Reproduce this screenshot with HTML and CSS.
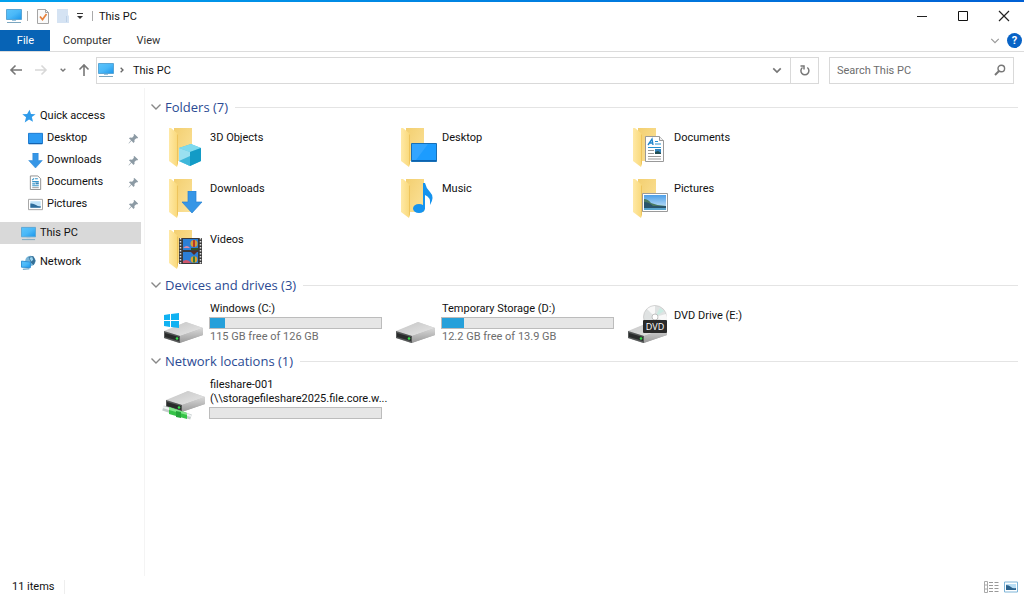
FILE: index.html
```html
<!DOCTYPE html>
<html lang="en">
<head>
<meta charset="utf-8">
<meta name="viewport" content="width=device-width, initial-scale=1">
<title>This PC</title>
<link rel="stylesheet" href="styles.css">
</head>
<body>
<svg class="defs" aria-hidden="true">
  <defs>
    <linearGradient id="screen" x1="0" y1="0" x2="1" y2="1"><stop offset="0" stop-color="#5cc4fb"/><stop offset=".5" stop-color="#4ab8f8"/><stop offset="1" stop-color="#1b95ea"/></linearGradient>
    <linearGradient id="flap" x1="0" y1="0" x2="1" y2="0"><stop offset="0" stop-color="#ffe9a6"/><stop offset="1" stop-color="#f9d878"/></linearGradient>
    <linearGradient id="back" x1="0" y1="0" x2="1" y2="1"><stop offset="0" stop-color="#f3cf70"/><stop offset="1" stop-color="#fbe29a"/></linearGradient>
    <linearGradient id="metal" x1="0" y1="0" x2="1" y2="1"><stop offset="0" stop-color="#c4c4c4"/><stop offset="1" stop-color="#e8e8e8"/></linearGradient>
    <linearGradient id="sky" x1="0" y1="0" x2="0" y2="1"><stop offset="0" stop-color="#4d9fe8"/><stop offset="1" stop-color="#d3ecfa"/></linearGradient>
    <linearGradient id="side" x1="0" y1="0" x2="0" y2="1"><stop offset="0" stop-color="#d8d8d8"/><stop offset="1" stop-color="#9a9a9a"/></linearGradient>
    <symbol id="pc" viewBox="0 0 16 16"><path d="M.5 1.500h15v10H.5z" fill="url(#screen)" stroke="#5aa6d6"/><path d="M6 12h4v1H6z" fill="#9fc4dc"/><path d="M1 14.500h14" stroke="#7ba6c0"/></symbol>
    <symbol id="folder" viewBox="0 0 48 48"><path d="M14 7h18v33H14z" fill="url(#back)"/><path d="M9 7h2l7 6v29l-1 4-8-6z" fill="url(#flap)"/><path d="M17 13l1 1v28l-1 3z" fill="#eec45c"/></symbol>
    <symbol id="drive" viewBox="0 0 48 48"><path d="M4 33l22-10 17 6v7L19 44 4 39z" fill="url(#side)"/><path d="M4 32l22-9 17 6-23 8z" fill="url(#metal)"/><path d="M4 32l16 5v7L4 39z" fill="#555858"/><path d="M5 34l14 4v4L5 38z" fill="#292b2b"/><circle cx="17" cy="39.500" r="1.300" fill="#35e04a"/><path d="M20 37l23-8v7l-23 8z" fill="url(#side)"/></symbol>
    <symbol id="pin" viewBox="0 0 12 12"><path d="M7 1l4 4-1 1-1-.4-2 2 .2 2L6 11 3.800 8.500 1 11.500l-.4-.4L3.300 8 1 5.800 2.300 5l2.200.1 2-2L6 2z" fill="#8c9aa4"/></symbol>
    <symbol id="chev" viewBox="0 0 12 12"><path d="M1.500 3.500L6 8l4.500-4.500" fill="none" stroke="currentColor" stroke-width="1.400"/></symbol>
    <symbol id="arrow" viewBox="0 0 16 16"><path d="M14 8H3M7.500 3.500L3 8l4.500 4.500" fill="none" stroke="currentColor" stroke-width="1.600"/></symbol>
    <symbol id="down" viewBox="0 0 22 22"><path d="M7 0h8v11h6L11 22 1 11h6z" fill="#3696e6" stroke="#2583d3" stroke-width=".7"/></symbol>
    <symbol id="photo" viewBox="0 0 28 21"><path d="M.5.500h25v18H.5z" fill="#fff" stroke="#9a9a9a"/><path d="M2 2h22v15H2z" fill="url(#sky)"/><path d="M2 6q4 0 7 4 7 3 15 3v2H2z" fill="#4a7a62"/><path d="M2 9q5 0 9 4h13v2H2z" fill="#29556a"/><path d="M2 15h22v2H2z" fill="#58a5ce"/></symbol>
  </defs>
</svg>

<div class="window">
  <header class="titlebar">
    <svg class="i16"><use href="#pc"/></svg>
    <span class="bar"></span>
    <button class="quick" aria-label="Properties"><svg class="i16" viewBox="0 0 16 16"><path d="M2.500 1.500h8l3 3v11h-11z" fill="#fafafa" stroke="#a5a5a5"/><path d="M10.500 1.500v3h3" fill="none" stroke="#a5a5a5"/><path d="M5 8.500l2.500 3L11.500 6" fill="none" stroke="#e8823c" stroke-width="1.700"/></svg></button>
    <button class="quick" aria-label="New folder"><svg class="i16" viewBox="0 0 16 16"><path d="M2 1h11v6l1 1v7H2z" fill="#d5e3f3"/><path d="M11.500 8v6" stroke="#bdd1e8"/></svg></button>
    <button class="more" aria-label="Customize toolbar"><svg class="i8" viewBox="0 0 8 8"><path d="M1 1.500h6" stroke="#333"/><path d="M1 4h6L4 7z" fill="#333"/></svg></button>
    <span class="bar"></span>
    <h1 class="title">This PC</h1>
    <div class="controls">
      <button aria-label="Minimize"><svg class="i12" viewBox="0 0 12 12"><path d="M1 6.500h10" stroke="#222"/></svg></button>
      <button aria-label="Maximize"><svg class="i12" viewBox="0 0 12 12"><path d="M1.500 1.500h9v9h-9z" fill="none" stroke="#111"/></svg></button>
      <button aria-label="Close"><svg class="i12" viewBox="0 0 12 12"><path d="M1 1l10 10M11 1L1 11" stroke="#222" stroke-width="1.200"/></svg></button>
    </div>
  </header>

  <nav class="ribbon" aria-label="Ribbon">
    <button class="tab file">File</button>
    <button class="tab">Computer</button>
    <button class="tab">View</button>
    <div class="ribbon-end">
      <button aria-label="Expand ribbon"><svg class="i10 pale"><use href="#chev"/></svg></button>
      <button class="help" aria-label="Help">?</button>
    </div>
  </nav>

  <div class="toolbar">
    <div class="history">
      <button aria-label="Back"><svg class="i16"><use href="#arrow"/></svg></button>
      <button aria-label="Forward" class="off"><svg class="i16 flip"><use href="#arrow"/></svg></button>
      <button aria-label="Recent locations"><svg class="i8" viewBox="0 0 12 12"><path d="M2.500 4L6 7.500 9.500 4" fill="none" stroke="#777" stroke-width="2"/></svg></button>
      <button aria-label="Up"><svg class="i16 up"><use href="#arrow"/></svg></button>
    </div>
    <div class="address">
      <svg class="i16"><use href="#pc"/></svg>
      <svg class="i8 right" viewBox="0 0 12 12"><path d="M2.500 4L6 7.500 9.500 4" fill="none" stroke="#666" stroke-width="2"/></svg>
      <a class="crumb" href="#">This PC</a>
      <button class="drop" aria-label="Previous locations"><svg class="i10" viewBox="0 0 12 12"><path d="M1.500 4L6 8.500 10.500 4" fill="none" stroke="#777" stroke-width="2"/></svg></button>
      <button class="refresh" aria-label="Refresh"><svg class="i12" viewBox="0 0 12 12"><path d="M8.300 3.500A4 4 0 1 1 3.500 3.500M1.500 2h3.500v3.500" fill="none" stroke="#777" stroke-width="1.500"/></svg></button>
    </div>
    <div class="search">
      <input type="text" aria-label="Search This PC" placeholder="Search This PC">
      <svg class="i12" viewBox="0 0 12 12"><circle cx="7.300" cy="4.500" r="3.300" fill="none" stroke="#777" stroke-width="1.400"/><path d="M5 7L1 11" stroke="#777" stroke-width="2"/></svg>
    </div>
  </div>

  <div class="body">
    <nav class="tree" aria-label="Locations">
      <a href="#" class="node"><svg class="i15" viewBox="0 0 14 14"><path d="M8 .8l1.300 3.800 4.300.2-3.500 2.700 1.100 4.500-3.700-2.200-4 2.700 1.200-4.700L1.200 5l4.500-.3z" fill="#2f9bea"/></svg>Quick access</a>
      <a href="#" class="node child"><svg class="i15" viewBox="0 0 16 16"><path d="M.5 2.500h15v11H.5z" fill="#2d9bf3" stroke="#1677cf"/><path d="M1 13.500h14" stroke="#0c5aa4"/></svg>Desktop<svg class="pin"><use href="#pin"/></svg></a>
      <a href="#" class="node child"><svg class="i15"><use href="#down"/></svg>Downloads<svg class="pin"><use href="#pin"/></svg></a>
      <a href="#" class="node child"><svg class="i15" viewBox="0 0 16 16"><path d="M2.500 1h8l3 3v11.500h-11z" fill="#fff" stroke="#8d8d8d"/><path d="M4.500 5.500l2-2M7.500 4h3M4.500 7h7M4.500 9.500h3M4.500 11.500h7" stroke="#3795c9" stroke-width="1.200"/><path d="M8 8h3.500v2H8z" fill="#3a86b8"/><path d="M4.500 13.500h7" stroke="#999"/></svg>Documents<svg class="pin"><use href="#pin"/></svg></a>
      <a href="#" class="node child"><svg class="i15" viewBox="0 0 16 16"><path d="M.5 2.500h15v11H.5z" fill="#fff" stroke="#a0a0a0"/><path d="M2.500 4.500h11v7h-11z" fill="#bfe2f8"/><path d="M2.500 7q3-.5 6 1.500t5 1v2h-11z" fill="#2d6c9b"/></svg>Pictures<svg class="pin"><use href="#pin"/></svg></a>
      <a href="#" class="node top selected" aria-current="page"><svg class="i15"><use href="#pc"/></svg>This PC</a>
      <a href="#" class="node top"><svg class="i15" viewBox="0 0 16 16"><circle cx="10" cy="6.300" r="5.500" fill="#78b5d8"/><path d="M8 2l5-1 2.500 5-2 5-3-3z" fill="#356f96"/><path d="M9 3l3-1 1 3-2 2z" fill="#9cd4ee"/><path d="M.5 6.500l9.500 1v6L.5 13z" fill="url(#screen)" stroke="#2e8fd3"/><path d="M2 15.200l7-.5" stroke="#3d86b5"/></svg>Network</a>
    </nav>

    <main class="content">
      <section>
        <h2><svg class="i12"><use href="#chev"/></svg>Folders (7)</h2>
        <div class="tiles">
          <a href="#" class="tile"><svg class="pic" viewBox="0 0 48 48"><use href="#folder"/><path d="M19 27l12-4 10 4v13l-11 5-11-5z" fill="#4bc3e2"/><path d="M19 27l12-4 10 4-11 4z" fill="#7fdaee"/><path d="M19 27l11 4v14l-11-5z" fill="#9ae0f0"/><path d="M30 31l11-4v13l-11 5z" fill="#139bc6"/><path d="M19 40l11-5v10z" fill="#3fb7da"/></svg><span class="info"><span class="name">3D Objects</span></span></a>
          <a href="#" class="tile"><svg class="pic" viewBox="0 0 48 48"><use href="#folder"/><path d="M19.500 22.500h25v18h-25z" fill="#1c9cff" stroke="#176fb6"/><path d="M20 23h16L24 39h-4z" fill="#41acff" opacity=".6"/><path d="M20 39.500h24" stroke="#0b62b0"/></svg><span class="info"><span class="name">Desktop</span></span></a>
          <a href="#" class="tile"><svg class="pic" viewBox="0 0 48 48"><use href="#folder"/><path d="M21.500 15.500h14l4 4v21h-18z" fill="#fff" stroke="#999"/><path d="M35.500 15.500v4h4" fill="#eee" stroke="#999"/><path d="M24 24l4-6 1 6M25.500 22H29" fill="none" stroke="#2186cc" stroke-width="1.400"/><path d="M31 20.500h3M31 23h6M24 26.500h13" stroke="#2791cf"/><path d="M24 29.500h6M24 32.500h6M24 35.500h13M24 38h13" stroke="#999"/><path d="M31 28h6v5h-6z" fill="#3183bd"/><path d="M31 31l3-1 3 2v1h-6z" fill="#234d50"/></svg><span class="info"><span class="name">Documents</span></span></a>
          <a href="#" class="tile"><svg class="pic" viewBox="0 0 48 48"><use href="#folder"/><use href="#down" x="21" y="19" width="22" height="22"/></svg><span class="info"><span class="name">Downloads</span></span></a>
          <a href="#" class="tile"><svg class="pic" viewBox="0 0 48 48"><use href="#folder"/><ellipse cx="27" cy="36.500" rx="6" ry="4.500" fill="#1593ee"/><path d="M31 11h2q1 5 5 9 5 5 0 13 1-8-5-10v14h-2z" fill="#1593ee"/></svg><span class="info"><span class="name">Music</span></span></a>
          <a href="#" class="tile"><svg class="pic" viewBox="0 0 48 48"><use href="#folder"/><use href="#photo" x="18" y="21" width="28" height="21"/></svg><span class="info"><span class="name">Pictures</span></span></a>
          <a href="#" class="tile"><svg class="pic" viewBox="0 0 48 48"><use href="#folder"/><path d="M19 15h23v26H19z" fill="#3a3a3a"/><path d="M20.500 15v26M40.500 15v26" stroke="#ddd" stroke-width="1.500" stroke-dasharray="1.500 1.500"/><path d="M23 16h15v11H23zM23 29h15v11H23z" fill="#2c7fd6"/><circle cx="34" cy="20.500" r="3.500" fill="#d1a23a"/><path d="M34 17v7" stroke="#b9362a" stroke-width="2"/><path d="M23 25q4-4 7 0z" fill="#de8aa5"/><path d="M31 25h7v2h-7z" fill="#31552c"/><path d="M30 28l4 4 4-4z" fill="#542d26"/><circle cx="34" cy="36.500" r="3.300" fill="#dfa12f"/><path d="M34 33.500v6" stroke="#347d3a" stroke-width="2"/><path d="M23 38q5-3 8 2h-8z" fill="#cf566c"/></svg><span class="info"><span class="name">Videos</span></span></a>
        </div>
      </section>

      <section>
        <h2><svg class="i12"><use href="#chev"/></svg>Devices and drives (3)</h2>
        <div class="tiles">
          <a href="#" class="tile detail"><svg class="pic" viewBox="0 0 48 48"><use href="#drive"/><path d="M4 16l6-1v6H4zM11 15l8-1v7h-8zM4 22h6v6l-6-1zM11 22h8v7l-8-1z" fill="#10b2f2"/></svg><span class="info"><span class="name">Windows (C:)</span><span class="usage" role="img" aria-label="Space used"><span class="used" style="width:9%"></span></span><span class="free">115 GB free of 126 GB</span></span></a>
          <a href="#" class="tile detail"><svg class="pic" viewBox="0 0 48 48"><use href="#drive"/></svg><span class="info"><span class="name">Temporary Storage (D:)</span><span class="usage" role="img" aria-label="Space used"><span class="used" style="width:13%"></span></span><span class="free">12.2 GB free of 13.9 GB</span></span></a>
          <a href="#" class="tile"><svg class="pic" viewBox="0 0 48 48"><use href="#drive"/><circle cx="31" cy="18" r="11.500" fill="#dfe2e2" stroke="#c4c4c4" stroke-width=".7"/><path d="M31 18L23 10q4-3 8-3zM31 18l11-3q2 4 0 8z" fill="#f8f8f8"/><path d="M31 18l5-9 4 3z" fill="#c9ebe2"/><circle cx="31" cy="18" r="3" fill="#fff" stroke="#aaa" stroke-width=".7"/><rect x="19" y="21" width="24" height="13" rx="1" fill="#2a2a2a"/><text class="disc" x="31" y="31" text-anchor="middle">DVD</text></svg><span class="info"><span class="name">DVD Drive (E:)</span></span></a>
        </div>
      </section>

      <section>
        <h2><svg class="i12"><use href="#chev"/></svg>Network locations (1)</h2>
        <div class="tiles">
          <a href="#" class="tile detail"><svg class="pic" viewBox="0 0 48 48"><use href="#drive" x="2" y="-7" width="48" height="48"/><path d="M3 33l28 9" stroke="#c4cccc" stroke-width="5"/><path d="M3 32l28 9" stroke="#f0f3f3" stroke-width="2"/><path d="M9 32l18 6v6L9 39z" fill="#36c348"/><path d="M9 32l18 6v2L9 35z" fill="#82e58b"/><path d="M16 36l5 1v6l-5-1z" fill="#25a53a"/></svg><span class="info"><span class="name">fileshare-001</span><span class="name">(\\storagefileshare2025.file.core.w...</span><span class="usage"></span></span></a>
        </div>
      </section>
    </main>
  </div>

  <footer class="status">
    <span class="count">11 items</span>
    <div class="views">
      <button aria-label="Details view"><svg class="i16" viewBox="0 0 16 16"><path d="M1.500 2.500h3v11h-3zM1.500 6h3M1.500 10h3" fill="none" stroke="#aaa"/><path d="M6 3.500h4M11.500 3.500h4M6 6.500h4M11.500 6.500h4M6 9.500h4M11.500 9.500h4M6 12.500h4M11.500 12.500h4" stroke="#999"/></svg></button>
      <button aria-label="Large icons view"><svg class="i14" viewBox="0 0 14 14"><path d="M.5 2h13v10H.5z" fill="#fff" stroke="#7eb5d8"/><path d="M2 4h10v6H2z" fill="#b9def5"/><path d="M2 5q3 0 5 2t5 1v2H2z" fill="#2c638d"/></svg></button>
    </div>
  </footer>
</div>
</body>
</html>
```
FILE: styles.css
```css
* { box-sizing: border-box; }
body { margin: 0; background: #fff; color: #111; font: 11px/14px Roboto, "Open Sans", sans-serif; }
button { border: 0; padding: 0; background: none; color: inherit; font: inherit; display: flex; align-items: center; justify-content: center; }
a { color: inherit; text-decoration: none; }
svg { display: block; flex: none; }
.defs { position: absolute; width: 0; height: 0; }
.i8 { width: 8px; height: 8px; }
.i10 { width: 10px; height: 10px; }
.i12 { width: 12px; height: 12px; }
.i14 { width: 14px; height: 14px; }
.i15 { width: 15px; height: 15px; }
.i16 { width: 16px; height: 16px; }
.pale { color: #999; }
.flip { transform: rotate(180deg); }
.up { transform: rotate(90deg); }
.right { transform: rotate(-90deg); }

.window { min-height: 100vh; display: flex; flex-direction: column; }
.titlebar { height: 30px; padding: 2px 0 0 6px; display: flex; align-items: center; background: linear-gradient(90deg, #00a1ee, #0060d4) top / 100% 2px no-repeat; }
.bar { width: 1px; height: 10px; margin: 0 5px; background: #aaa; }
.quick { width: 20px; }
.more { width: 14px; }
.title { margin: 0; padding: 2px 0 0 1px; font-size: 11px; line-height: 14px; font-weight: 400; }
.controls { margin-left: auto; display: flex; align-self: stretch; }
.controls button { width: 41px; }

.ribbon { height: 22px; display: flex; border-bottom: 1px solid #dcdcdc; }
.tab { padding: 1px 12px 0 13px; color: #333; }
.file { width: 50px; background: #0763b5; color: #fff; }
.ribbon-end { margin-left: auto; padding-right: 2px; display: flex; align-items: center; gap: 7px; }
.help { width: 15px; height: 15px; border-radius: 50%; background: #0863c6; color: #fff; font-weight: 700; }

.toolbar { height: 36px; padding: 0 10px 0 8px; display: flex; align-items: center; }
.history { width: 88px; display: flex; align-items: center; color: #777; justify-content: space-between; padding-right: 4px; }
.off { color: #d8d8d8; }
.address { flex: 1; height: 27px; border: 1px solid #d9d9d9; display: flex; align-items: center; padding-left: 1px; gap: 4px; }
.crumb { margin-left: 3px; padding-top: 2px; }
.drop { width: 26px; margin-left: auto; align-self: stretch; }
.refresh { width: 28px; align-self: stretch; border-left: 1px solid #d9d9d9; }
.address .refresh { margin-left: -4px; }
.search { width: 185px; height: 27px; margin-left: 10px; padding: 0 7px; border: 1px solid #d9d9d9; display: flex; align-items: center; }
.search input { flex: 1; min-width: 0; border: 0; padding: 2px 0 0; outline: 0; font: inherit; background: none; }
.search input::placeholder { color: #6d6d6d; opacity: 1; }

.body { flex: 1; display: flex; }
.tree { width: 145px; padding: 17px 3px 0 0; border-right: 1px solid #f4f4f4; }
.node { height: 22px; display: flex; align-items: center; gap: 4px; padding-left: 21px; }
.node.child { padding-left: 28px; }
.node.top { margin-top: 7px; }
.selected { background: #d9d9d9; }
.pin { width: 11px; height: 11px; margin: 0 2px 0 auto; }

.content { flex: 1; min-width: 0; padding: 7px 6px 0 5px; }
h2 { margin: 0; height: 24px; display: flex; align-items: center; gap: 3px; color: #2b4a93; font: 400 13px/20px "Open Sans", "Noto Sans", sans-serif; }
h2 svg { color: #888; }
h2::after { content: ""; flex: 1; height: 1px; margin-left: 4px; background: #e4e4e4; }
.tiles { display: grid; grid-template-columns: repeat(auto-fill, 232px); grid-auto-rows: 51px; padding-left: 10px; }
section + section h2 { margin-top: 1px; }
.tile { display: flex; gap: 1px; }
.pic { width: 48px; height: 48px; margin-top: 2px; }
.info { width: 173px; padding-top: 12px; }
.detail .info { padding-top: 5px; }
.name, .free { display: block; padding-left: 1px; white-space: nowrap; }
.usage { display: block; height: 12px; margin: 1px 0; border: 1px solid #bcbcbc; background: #e6e6e6; }
.used { display: block; height: 100%; background: #26a0da; }
.free { color: #6d6d6d; }
.disc { fill: #fff; font: 400 9px "Open Sans", sans-serif; }

.status { height: 21px; padding: 0 6px 0 12px; display: flex; align-items: center; justify-content: space-between; }
.count { padding-right: 9px; border-right: 1px solid #eee; }
.views { display: flex; gap: 5px; }
```
